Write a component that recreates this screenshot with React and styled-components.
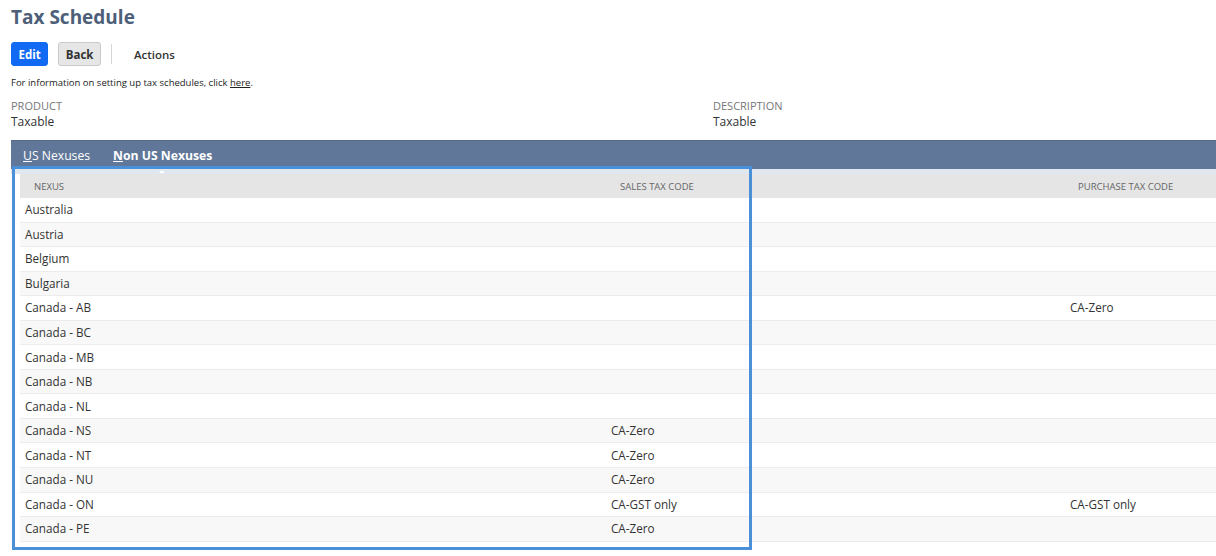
import React from "react";
import styled, { createGlobalStyle } from "styled-components";

const Global = createGlobalStyle`
  html, body { margin: 0; padding: 0; background: #fff; }
  body { font-family: "Open Sans", "Liberation Sans", sans-serif; color: #333; }
  * { box-sizing: border-box; }
`;

const Page = styled.div`
  position: relative;
  width: 1216px;
  height: 556px;
  overflow: hidden;
`;

const Head = styled.div`
  padding: 4px 0 0 11px;
`;

const Title = styled.h1`
  margin: 0;
  font-size: 19px;
  line-height: 26px;
  font-weight: 700;
  color: #4d5f79;
`;

const Toolbar = styled.div`
  display: flex;
  align-items: center;
  margin-top: 12px;
  height: 24px;
`;

const Button = styled.button`
  height: 24px;
  padding: 0 6.5px;
  border-radius: 3px;
  font-family: inherit;
  font-size: 11.5px;
  font-weight: 700;
  border: 1px solid ${(p) => (p.$primary ? "#0f6cf2" : "#c9c9c9")};
  background: ${(p) => (p.$primary ? "#1169f4" : "#e6e6e6")};
  color: ${(p) => (p.$primary ? "#fff" : "#333")};
  margin-right: 10px;
`;

const Divider = styled.div`
  width: 1px;
  height: 20px;
  background: #d6d6d6;
  margin: 0 22px 0 0;
`;

const MenuLabel = styled.span`
  font-size: 11.5px;
  font-weight: 600;
  color: #333;
`;

const Info = styled.p`
  margin: 10px 0 0;
  font-size: 9.5px;
  line-height: 14px;
  color: #222;
  a { color: #222; text-decoration: underline; }
`;

const Fields = styled.div`
  display: grid;
  grid-template-columns: 702px 1fr;
  margin-top: 8px;
`;

const Field = styled.div`
  display: flex;
  flex-direction: column;
`;

const FieldLabel = styled.span`
  font-size: 11px;
  line-height: 16px;
  color: #777;
  text-transform: uppercase;
`;

const FieldValue = styled.span`
  font-size: 12px;
  line-height: 16px;
  color: #333;
`;

const TabBar = styled.div`
  margin: 10px 0 0 11px;
  height: 29px;
  background: #607799;
  border-top: 1px solid #55698a;
  display: flex;
  align-items: center;
  padding-left: 12px;
  gap: 23px;
`;

const Tab = styled.span`
  position: relative;
  font-size: 12.2px;
  color: #fff;
  font-weight: ${(p) => (p.$active ? 700 : 400)};
  u { text-decoration: underline; }
  ${(p) =>
    p.$active &&
    `&::after {
      content: "";
      position: absolute;
      left: 46px;
      bottom: -9px;
      border-left: 3px solid transparent;
      border-right: 3px solid transparent;
      border-bottom: 3px solid #fff;
    }`}
`;

const Strip = styled.div`
  margin-left: 11px;
  height: 5px;
  background: #e1e7ef;
`;

const Table = styled.div`
  margin-left: 20px;
`;

const HeaderRow = styled.div`
  display: grid;
  grid-template-columns: 586px 459px 1fr;
  height: 24px;
  background: #e5e5e5;
  align-items: center;
`;

const HeaderCell = styled.span`
  padding-left: ${(p) => p.$pad || 14}px;
  font-size: 9.5px;
  color: #666;
  text-transform: uppercase;
`;

const Row = styled.div`
  display: grid;
  grid-template-columns: 586px 459px 1fr;
  height: 24.55px;
  align-items: center;
  padding-bottom: 1px;
  background: ${(p) => (p.$alt ? "#f8f8f8" : "#fff")};
  border-bottom: 1px solid #ececec;
`;

const Cell = styled.span`
  padding-left: 5px;
  font-size: 11.7px;
  color: #333;
`;

const Highlight = styled.div`
  position: absolute;
  left: 12px;
  top: 166px;
  width: 740px;
  height: 384px;
  border: 3.5px solid #4a90d9;
  pointer-events: none;
`;

const rows = [
  ["Australia", "", ""],
  ["Austria", "", ""],
  ["Belgium", "", ""],
  ["Bulgaria", "", ""],
  ["Canada - AB", "", "CA-Zero"],
  ["Canada - BC", "", ""],
  ["Canada - MB", "", ""],
  ["Canada - NB", "", ""],
  ["Canada - NL", "", ""],
  ["Canada - NS", "CA-Zero", ""],
  ["Canada - NT", "CA-Zero", ""],
  ["Canada - NU", "CA-Zero", ""],
  ["Canada - ON", "CA-GST only", "CA-GST only"],
  ["Canada - PE", "CA-Zero", ""],
];

export default function App() {
  return (
    <Page>
      <Global />
      <Head>
        <Title>Tax Schedule</Title>
        <Toolbar>
          <Button $primary>Edit</Button>
          <Button>Back</Button>
          <Divider />
          <MenuLabel>Actions</MenuLabel>
        </Toolbar>
        <Info>
          For information on setting up tax schedules, click <a href="#">here</a>.
        </Info>
        <Fields>
          <Field>
            <FieldLabel>Product</FieldLabel>
            <FieldValue>Taxable</FieldValue>
          </Field>
          <Field>
            <FieldLabel>Description</FieldLabel>
            <FieldValue>Taxable</FieldValue>
          </Field>
        </Fields>
      </Head>
      <TabBar>
        <Tab>
          <u>U</u>S Nexuses
        </Tab>
        <Tab $active>
          <u>N</u>on US Nexuses
        </Tab>
      </TabBar>
      <Strip />
      <Table>
        <HeaderRow>
          <HeaderCell>Nexus</HeaderCell>
          <HeaderCell>Sales Tax Code</HeaderCell>
          <HeaderCell $pad={13}>Purchase Tax Code</HeaderCell>
        </HeaderRow>
        {rows.map((r, i) => (
          <Row key={r[0]} $alt={i % 2 === 1}>
            <Cell>{r[0]}</Cell>
            <Cell>{r[1]}</Cell>
            <Cell>{r[2]}</Cell>
          </Row>
        ))}
      </Table>
      <Highlight />
    </Page>
  );
}
